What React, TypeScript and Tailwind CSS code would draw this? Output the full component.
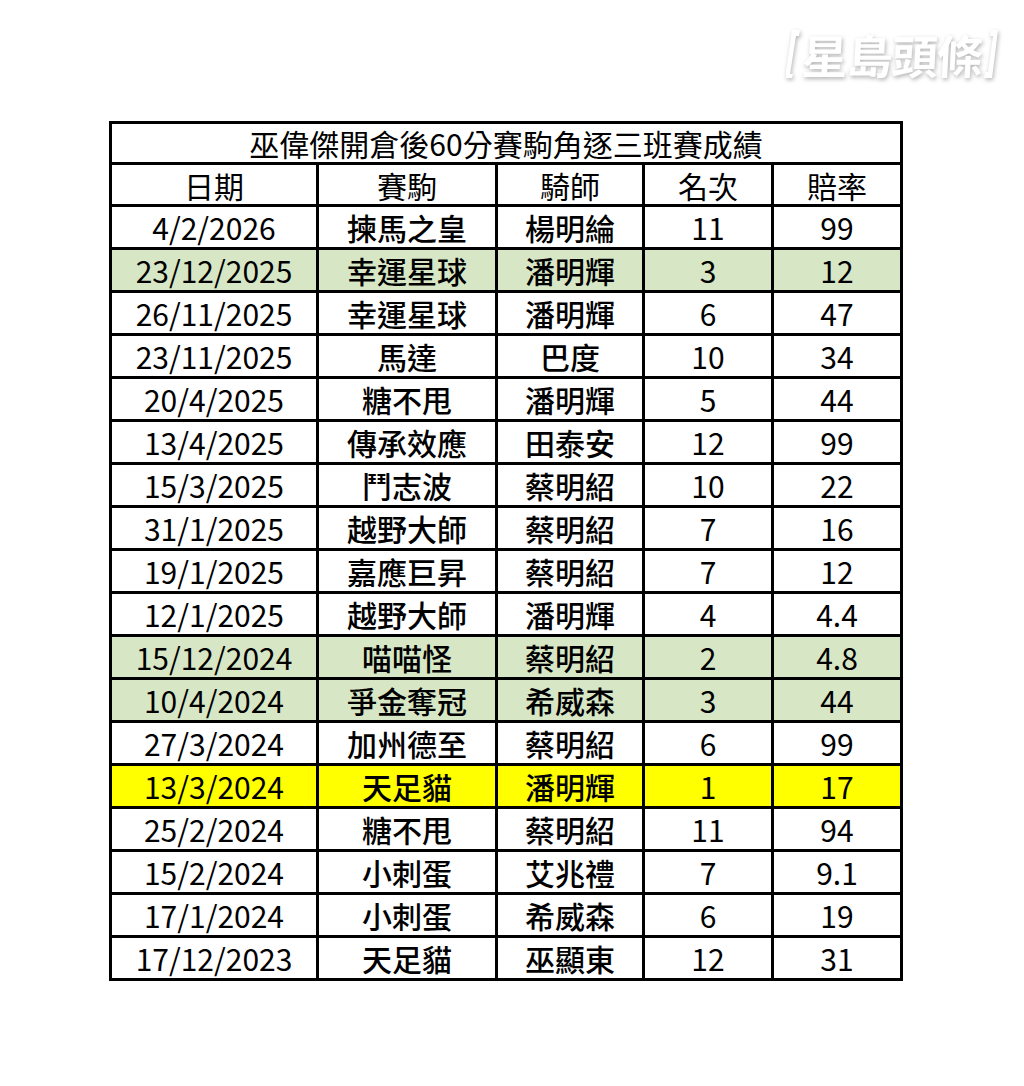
import React from "react";

type Row = { d: string; h: string; j: string; p: string; o: string; bg?: "g" | "y" };

const rows: Row[] = [
  { d: "4/2/2026", h: "揀馬之皇", j: "楊明綸", p: "11", o: "99" },
  { d: "23/12/2025", h: "幸運星球", j: "潘明輝", p: "3", o: "12", bg: "g" },
  { d: "26/11/2025", h: "幸運星球", j: "潘明輝", p: "6", o: "47" },
  { d: "23/11/2025", h: "馬達", j: "巴度", p: "10", o: "34" },
  { d: "20/4/2025", h: "糖不甩", j: "潘明輝", p: "5", o: "44" },
  { d: "13/4/2025", h: "傳承效應", j: "田泰安", p: "12", o: "99" },
  { d: "15/3/2025", h: "鬥志波", j: "蔡明紹", p: "10", o: "22" },
  { d: "31/1/2025", h: "越野大師", j: "蔡明紹", p: "7", o: "16" },
  { d: "19/1/2025", h: "嘉應巨昇", j: "蔡明紹", p: "7", o: "12" },
  { d: "12/1/2025", h: "越野大師", j: "潘明輝", p: "4", o: "4.4" },
  { d: "15/12/2024", h: "喵喵怪", j: "蔡明紹", p: "2", o: "4.8", bg: "g" },
  { d: "10/4/2024", h: "爭金奪冠", j: "希威森", p: "3", o: "44", bg: "g" },
  { d: "27/3/2024", h: "加州德至", j: "蔡明紹", p: "6", o: "99" },
  { d: "13/3/2024", h: "天足貓", j: "潘明輝", p: "1", o: "17", bg: "y" },
  { d: "25/2/2024", h: "糖不甩", j: "蔡明紹", p: "11", o: "94" },
  { d: "15/2/2024", h: "小刺蛋", j: "艾兆禮", p: "7", o: "9.1" },
  { d: "17/1/2024", h: "小刺蛋", j: "希威森", p: "6", o: "19" },
  { d: "17/12/2023", h: "天足貓", j: "巫顯東", p: "12", o: "31" },
];

function Cell({ children, bg, tall, cjk }: { children: React.ReactNode; bg?: "g" | "y"; tall?: boolean; cjk?: boolean }) {
  const color = bg === "g" ? "bg-[#d7e7c6]" : bg === "y" ? "bg-[#ffff00]" : "bg-white";
  const height = tall ? "h-[40px]" : "h-[39px]";
  const weight = cjk ? "font-medium" : "font-normal";
  return (
    <div className={`${color} ${height} ${weight} flex items-center justify-center text-[30px] leading-none text-black`}>
      {children}
    </div>
  );
}

function Logo() {
  return (
    <div className="absolute left-[786px] top-[28px] flex items-center drop-shadow-[1px_2px_2px_rgba(0,0,0,0.3)]">
      <svg width="16" height="52" viewBox="0 0 16 52">
        <polygon points="6,2 14,2 13,8 10,8 4,46 7,46 6,50 -1,50" fill="#ffffff" />
      </svg>
      <span className="-skew-x-3 text-[46px] font-bold leading-none tracking-[-1px] text-white">星島頭條</span>
      <svg width="16" height="52" viewBox="0 0 16 52">
        <polygon points="9,2 16,2 10,50 2,50 3,44 6,44 11,8 8,8" fill="#ffffff" />
      </svg>
    </div>
  );
}

export default function App() {
  return (
    <div className="relative h-[1086px] w-[1024px] bg-white font-['Noto_Sans_CJK_TC','Noto_Sans',sans-serif]">
      <Logo />
      <div className="pl-[109px] pt-[121px]">
        <div className="grid w-[794px] grid-cols-[204px_176px_144px_126px_126px] gap-[3px] bg-black p-[3px]">
          <div className="col-span-5 flex h-[38px] items-center justify-center bg-white text-[30px] font-normal leading-none text-black">
            巫偉傑開倉後60分賽駒角逐三班賽成績
          </div>
          {["日期", "賽駒", "騎師", "名次", "賠率"].map((t) => (
            <Cell key={t}>{t}</Cell>
          ))}
          {rows.map((r, i) => (
            <React.Fragment key={i}>
              <Cell bg={r.bg} tall>{r.d}</Cell>
              <Cell bg={r.bg} tall cjk>{r.h}</Cell>
              <Cell bg={r.bg} tall cjk>{r.j}</Cell>
              <Cell bg={r.bg} tall>{r.p}</Cell>
              <Cell bg={r.bg} tall>{r.o}</Cell>
            </React.Fragment>
          ))}
        </div>
      </div>
    </div>
  );
}
